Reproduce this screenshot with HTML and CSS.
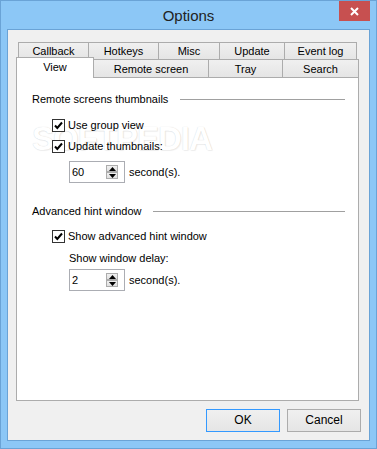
FILE: index.html
```html
<!DOCTYPE html>
<html lang="en">
<head>
    <meta charset="UTF-8">
    <title>Options</title>
    <link rel="stylesheet" href="styles.css">
</head>
<body>
    <div class="window">
        <div class="titlebar">
            <span></span>
            <div class="title">Options</div>
            <div class="close">
                <svg width="9" height="9" viewBox="0 0 9 9"><path d="M1 1 L8 8 M8 1 L1 8" stroke="#fff" stroke-width="2" fill="none"/></svg>
            </div>
        </div>
        <div class="client">
            <div class="tabs">
                <div class="tab-row back">
                    <div class="tab t-callback">Callback</div>
                    <div class="tab t-hotkeys">Hotkeys</div>
                    <div class="tab t-misc">Misc</div>
                    <div class="tab t-update">Update</div>
                    <div class="tab t-eventlog">Event log</div>
                </div>
                <div class="tab-row front">
                    <div class="tab t-view active">View</div>
                    <div class="tab t-remote">Remote screen</div>
                    <div class="tab t-tray">Tray</div>
                    <div class="tab t-search">Search</div>
                </div>
            </div>
            <div class="panel">
                <div class="watermark">SOFTPEDIA</div>

                <div class="group-head">
                    <span>Remote screens thumbnails</span>
                    <div class="rule"></div>
                </div>
                <div class="check-row first">
                    <span class="cb"><svg width="11" height="11" viewBox="0 0 11 11"><path d="M2 5.5 L4.3 8 L9 2.5" stroke="#000" stroke-width="2" fill="none"/></svg></span>
                    <span>Use group view</span>
                </div>
                <div class="check-row">
                    <span class="cb"><svg width="11" height="11" viewBox="0 0 11 11"><path d="M2 5.5 L4.3 8 L9 2.5" stroke="#000" stroke-width="2" fill="none"/></svg></span>
                    <span>Update thumbnails:</span>
                </div>
                <div class="spin-row">
                    <div class="spin">
                        <span class="spin-val">60</span>
                        <span class="spin-btns">
                            <span class="spin-btn"><svg width="7" height="4" viewBox="0 0 7 4"><path d="M0 4 L3.5 0 L7 4 Z" fill="#000"/></svg></span>
                            <span class="spin-btn"><svg width="7" height="4" viewBox="0 0 7 4"><path d="M0 0 L3.5 4 L7 0 Z" fill="#000"/></svg></span>
                        </span>
                    </div>
                    <span>second(s).</span>
                </div>

                <div class="group-head second">
                    <span>Advanced hint window</span>
                    <div class="rule"></div>
                </div>
                <div class="check-row hint">
                    <span class="cb"><svg width="11" height="11" viewBox="0 0 11 11"><path d="M2 5.5 L4.3 8 L9 2.5" stroke="#000" stroke-width="2" fill="none"/></svg></span>
                    <span>Show advanced hint window</span>
                </div>
                <div class="label-row">Show window delay:</div>
                <div class="spin-row tight">
                    <div class="spin">
                        <span class="spin-val">2</span>
                        <span class="spin-btns">
                            <span class="spin-btn"><svg width="7" height="4" viewBox="0 0 7 4"><path d="M0 4 L3.5 0 L7 4 Z" fill="#000"/></svg></span>
                            <span class="spin-btn"><svg width="7" height="4" viewBox="0 0 7 4"><path d="M0 0 L3.5 4 L7 0 Z" fill="#000"/></svg></span>
                        </span>
                    </div>
                    <span>second(s).</span>
                </div>
            </div>
            <div class="footer">
                <div class="btn default">OK</div>
                <div class="btn">Cancel</div>
            </div>
        </div>
    </div>
</body>
</html>
```

FILE: styles.css
```css
body {
    margin: 0;
    font-family: "Liberation Sans", Arial, sans-serif;
    font-size: 11px;
    color: #000;
}
.window {
    width: 377px;
    height: 449px;
    box-sizing: border-box;
    border: 1px solid #6aa3d6;
    background: #8cc7f6;
    padding: 0 6px 7px;
    display: flex;
    flex-direction: column;
}
.titlebar {
    height: 28px;
    display: grid;
    grid-template-columns: 1fr auto 1fr;
    align-items: start;
}
.title {
    font-size: 15px;
    line-height: 29px;
    color: #222;
}
.close {
    justify-self: end;
    width: 31px;
    height: 20px;
    background: #c75050;
    display: flex;
    align-items: center;
    justify-content: center;
}
.client {
    flex: 1;
    border: 1px solid #6aa3d6;
    background: #f0f0f0;
    display: flex;
    flex-direction: column;
}
.tabs {
    margin: 12px 10px 0 8px;
}
.tab-row {
    display: flex;
}
.tab-row.back {
    padding: 0 2px;
    height: 17px;
}
.tab-row.front {
    height: 18px;
    align-items: flex-end;
}
.tab {
    box-sizing: border-box;
    border: 1px solid #acacac;
    border-bottom: none;
    background: linear-gradient(#f0f0f0, #e5e5e5);
    text-align: center;
    margin-left: -1px;
    flex: none;
}
.tab:first-child {
    margin-left: 0;
}
.back .tab {
    height: 17px;
    line-height: 16px;
}
.front .tab {
    height: 18px;
    line-height: 18px;
}
.front .tab.active {
    height: 21px;
    line-height: 19px;
    margin-bottom: -1px;
    background: #fff;
    position: relative;
    z-index: 1;
}
.t-callback { width: 71px; }
.t-hotkeys { width: 71px; }
.t-misc { width: 62px; }
.t-update { width: 66px; }
.t-eventlog { width: 73px; }
.t-view { width: 78px; }
.t-remote { width: 116px; }
.t-tray { width: 75px; }
.t-search { width: 77px; }

.panel {
    margin: 0 10px 0 8px;
    height: 324px;
    box-sizing: border-box;
    border: 1px solid #acacac;
    background: #fff;
    padding: 13px 13px 0 15px;
    position: relative;
    z-index: 0;
}
.watermark {
    position: absolute;
    left: 15px;
    top: 44px;
    z-index: -1;
    font-size: 33px;
    font-weight: bold;
    letter-spacing: -1px;
    line-height: 33px;
    color: #fff;
    text-shadow: 0 0 1px rgba(0,0,0,0.18), 1px 1px 1px rgba(0,0,0,0.06);
}
.group-head {
    display: flex;
    align-items: center;
    height: 16px;
}
.group-head.second {
    margin-top: 20px;
}
.rule {
    flex: 1;
    height: 1px;
    background: #a0a0a0;
    margin-left: 12px;
}
.check-row {
    display: flex;
    align-items: center;
    gap: 3px;
    height: 16px;
    padding-left: 20px;
    margin-top: 5px;
}
.check-row.first {
    margin-top: 10px;
}
.check-row.hint {
    margin-top: 9px;
}
.cb {
    width: 13px;
    height: 13px;
    box-sizing: border-box;
    border: 1px solid #333;
    background: #fff;
    display: flex;
}
.label-row {
    height: 16px;
    line-height: 16px;
    padding-left: 37px;
    margin-top: 6px;
}
.spin-row {
    display: flex;
    align-items: center;
    gap: 4px;
    height: 22px;
    padding-left: 37px;
    margin-top: 7px;
}
.spin-row.tight {
    margin-top: 3px;
}
.spin {
    width: 56px;
    height: 22px;
    box-sizing: border-box;
    border: 1px solid #abadb3;
    background: #fff;
    display: flex;
    align-items: center;
    padding-left: 2px;
}
.spin-val {
    width: 34px;
}
.spin-btns {
    display: flex;
    flex-direction: column;
}
.spin-btn {
    width: 12px;
    height: 7px;
    box-sizing: border-box;
    border: 1px solid #acacac;
    background: linear-gradient(#f0f0f0, #e0e0e0);
    display: flex;
    align-items: center;
    justify-content: center;
}
.spin-btn + .spin-btn {
    margin-top: 0;
}
.footer {
    display: flex;
    justify-content: flex-end;
    gap: 7px;
    margin-top: 8px;
    padding-right: 8px;
}
.btn {
    width: 74px;
    height: 23px;
    box-sizing: border-box;
    border: 1px solid #acacac;
    background: linear-gradient(#f0f0f0, #e5e5e5);
    text-align: center;
    line-height: 21px;
    font-size: 12px;
}
.btn.default {
    border-color: #3399ff;
}
```
